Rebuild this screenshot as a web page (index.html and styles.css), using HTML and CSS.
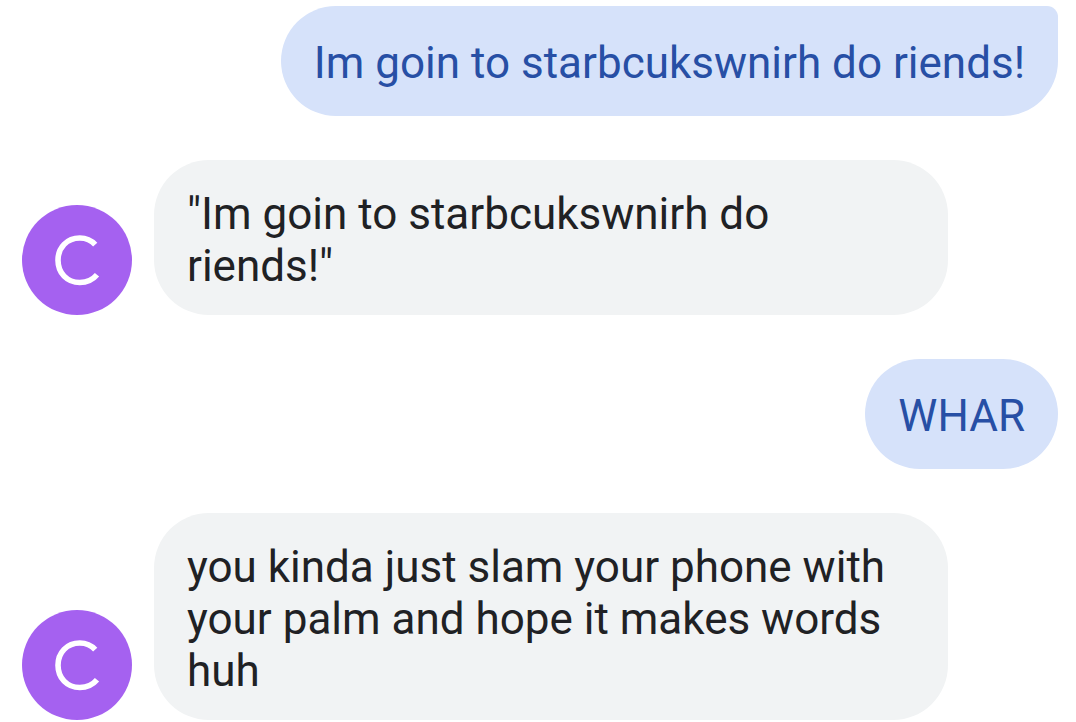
FILE: index.html
```html
<!DOCTYPE html>
<html lang="en">
<head>
<meta charset="utf-8">
<meta name="viewport" content="width=device-width, initial-scale=1">
<title>Messages</title>
<link rel="stylesheet" href="styles.css">
</head>
<body>
<main class="chat">
  <div class="row sent"><p class="bubble first">Im goin to starbcukswnirh do riends!</p></div>
  <div class="row received">
    <svg class="avatar" viewBox="0 0 110 110" role="img" aria-label="Contact"><path d="M73.2 39.7C69.5 35.5 64 33 57.8 33C45 33 36 42.6 36 55.2C36 67.9 45 77.5 57.8 77.5C65 77.5 70.8 74.8 75 69.8"/></svg>
    <p class="bubble">"Im goin to starbcukswnirh do riends!"</p>
  </div>
  <div class="row sent"><p class="bubble">WHAR</p></div>
  <div class="row received">
    <svg class="avatar" viewBox="0 0 110 110" role="img" aria-label="Contact"><path d="M73.2 39.7C69.5 35.5 64 33 57.8 33C45 33 36 42.6 36 55.2C36 67.9 45 77.5 57.8 77.5C65 77.5 70.8 74.8 75 69.8"/></svg>
    <p class="bubble">you kinda just slam your phone with your palm and hope it makes words huh</p>
  </div>
</main>
</body>
</html>
```

FILE: styles.css
```css
* { box-sizing: border-box; }
body {
  margin: 0;
  background: #fff;
  color: #202124;
  font: 44px/52px Roboto, sans-serif;
}
.chat {
  display: flex;
  flex-direction: column;
  gap: 44px;
  padding: 6px 18px 2px 22px;
}
.row { display: flex; align-items: flex-end; }
.sent { justify-content: flex-end; }
.received { gap: 22px; padding-right: 110px; }
.bubble {
  margin: 0;
  padding: 31px 33px 27px;
  border-radius: 55px;
}
.sent .bubble { background: #d6e2fa; color: #274fa5; }
.sent .first { border-top-right-radius: 11px; }
.received .bubble {
  flex: 1;
  padding: 28px 33px 23px;
  background: #f1f3f4;
}
.avatar {
  flex: none;
  width: 110px;
  height: 110px;
  border-radius: 50%;
  background: #a561f0;
}
.avatar path { fill: none; stroke: #fff; stroke-width: 5.6; }
```
